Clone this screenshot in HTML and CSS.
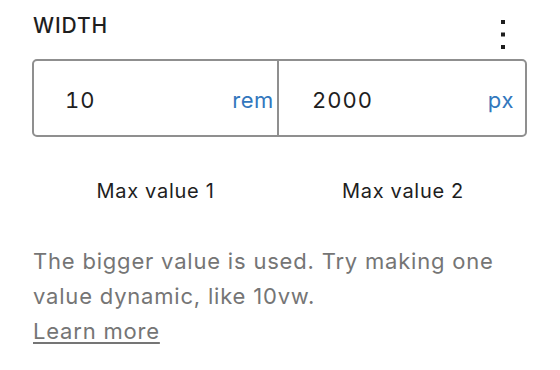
FILE: index.html
```html
<!DOCTYPE html>
<html>
<head>
<meta charset="utf-8">
<link rel="stylesheet" href="styles.css">
</head>
<body>
<div class="panel">
  <div class="header">
    <span class="label">WIDTH</span>
    <button class="menu" aria-label="Options">
      <svg width="6" height="32" viewBox="0 0 6 32"><rect x="1" y="1" width="4" height="4" fill="#1e1e1e"/><rect x="1" y="13.5" width="4" height="4" fill="#1e1e1e"/><rect x="1" y="26" width="4" height="4" fill="#1e1e1e"/></svg>
    </button>
  </div>
  <div class="box">
    <div class="cell cell-left"><span class="val">10</span><span class="unit">rem</span></div>
    <div class="cell cell-right"><span class="val">2000</span><span class="unit">px</span></div>
  </div>
  <div class="captions">
    <span>Max value 1</span>
    <span>Max value 2</span>
  </div>
  <p class="help">The bigger value is used. Try making one value dynamic, like 10vw.<br><a href="#" class="learn">Learn more</a></p>
</div>
</body>
</html>
```
FILE: styles.css
```css
html, body {
  margin: 0;
  padding: 0;
  background: #ffffff;
}
body {
  font-family: Inter, "Noto Sans", sans-serif;
  color: #1e1e1e;
}
.panel {
  width: 495px;
  padding-left: 32px;
}
.header {
  display: flex;
  justify-content: space-between;
  align-items: flex-start;
  height: 59px;
}
.label {
  display: block;
  margin-top: 13px;
  margin-left: 1px;
  font-size: 21px;
  line-height: 26px;
  font-weight: 500;
  letter-spacing: 0.9px;
}
.menu {
  margin: 19px 21px 0 0;
  padding: 0;
  border: 0;
  background: none;
  width: 6px;
  height: 32px;
}
.menu svg {
  display: block;
}
.box {
  display: grid;
  grid-template-columns: 245px 1fr;
  height: 78px;
  box-sizing: border-box;
  border: 2px solid #8f8f8f;
  border-radius: 5px;
}
.cell {
  display: flex;
  align-items: center;
  justify-content: space-between;
  font-size: 22px;
  padding-top: 4px;
}
.cell-left {
  padding-left: 31px;
  padding-right: 3px;
  border-right: 2px solid #8f8f8f;
}
.cell-right {
  padding-left: 33px;
  padding-right: 11px;
}
.val {
  color: #1e1e1e;
  font-feature-settings: "tnum";
  letter-spacing: 1px;
}
.unit {
  color: #3277bd;
  letter-spacing: 0.6px;
}
.captions {
  display: grid;
  grid-template-columns: 247px 1fr;
  text-align: center;
  font-size: 20px;
  line-height: 24px;
  letter-spacing: 0.7px;
  margin-top: 42px;
}
.help {
  width: 480px;
  margin: 41px 0 0 1px;
  font-size: 22px;
  line-height: 35px;
  letter-spacing: 0.8px;
  color: #757575;
}
.learn {
  color: #757575;
  text-decoration: underline;
  text-underline-offset: 3px;
}
```
